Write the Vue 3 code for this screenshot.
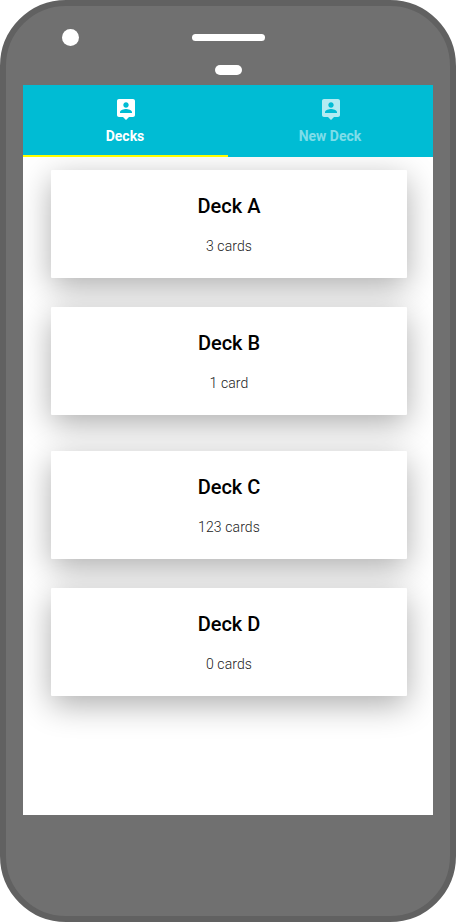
<script setup>
import { ref } from 'vue'

const tabs = ['Decks', 'New Deck']
const active = ref(0)
const groups = [
  [
    { name: 'Deck A', count: '3 cards' },
    { name: 'Deck B', count: '1 card' },
  ],
  [
    { name: 'Deck C', count: '123 cards' },
    { name: 'Deck D', count: '0 cards' },
  ],
]
</script>

<template>
  <div class="phone">
    <header class="hardware">
      <span class="camera"></span>
      <span class="sensors">
        <span class="speaker"></span>
        <span class="sensor"></span>
      </span>
    </header>
    <main class="screen">
      <nav class="tabs">
        <button
          v-for="(tab, i) in tabs"
          :key="tab"
          class="tab"
          :class="{ active: i === active }"
          @click="active = i"
        >
          <svg class="icon" viewBox="0 0 24 24">
            <path
              d="M19 2H5c-1.11 0-2 .9-2 2v14c0 1.1.89 2 2 2h4l3 3 3-3h4c1.1 0 2-.9 2-2V4c0-1.1-.9-2-2-2zm-7 3.3c1.49 0 2.7 1.21 2.7 2.7 0 1.49-1.21 2.7-2.7 2.7-1.49 0-2.7-1.21-2.7-2.7 0-1.49 1.21-2.7 2.7-2.7zM18 16H6v-.9c0-2 4-3.1 6-3.1s6 1.100 6 3.100v.9z"
            />
          </svg>
          <span class="label">{{ tab }}</span>
        </button>
      </nav>
      <div class="decks">
        <section v-for="(group, g) in groups" :key="g" class="group">
          <article v-for="deck in group" :key="deck.name" class="card">
            <h2 class="name">{{ deck.name }}</h2>
            <p class="count">{{ deck.count }}</p>
          </article>
        </section>
      </div>
    </main>
  </div>
</template>

<style>
body {
  background: #fff;
}
</style>

<style scoped>
.phone {
  box-sizing: border-box;
  width: 456px;
  height: 922px;
  padding: 0 17px;
  border: 6px solid #616161;
  border-radius: 66px;
  background: #707070;
  font-family: Roboto, sans-serif;
}
.hardware {
  display: grid;
  grid-template-columns: 1fr auto 1fr;
  height: 79px;
}
.camera {
  width: 17px;
  height: 17px;
  margin: 23px 0 0 39px;
  border-radius: 50%;
  background: #fff;
}
.sensors {
  display: flex;
  flex-direction: column;
  align-items: center;
  gap: 24px;
  padding: 28px 0 0 1px;
}
.speaker {
  width: 73px;
  height: 7px;
  border-radius: 4px;
  background: #fff;
}
.sensor {
  width: 27px;
  height: 10px;
  border-radius: 5px;
  background: #fff;
}
.screen {
  height: 730px;
  overflow: hidden;
  background: #fff;
}
.tabs {
  display: flex;
  height: 72px;
  background: #00bcd4;
}
.tab {
  box-sizing: border-box;
  display: flex;
  flex: 1;
  flex-direction: column;
  align-items: center;
  height: 72px;
  padding: 12px 0 0;
  border: 0;
  border-bottom: 2px solid transparent;
  background: none;
  color: rgba(255, 255, 255, 0.5);
  font: 700 14px/20px Roboto, sans-serif;
}
.tab.active {
  border-bottom-color: #ff0;
  color: #fff;
}
.icon {
  width: 24px;
  height: 24px;
  margin-bottom: 5px;
  fill: rgba(255, 255, 255, 0.7);
}
.active .icon {
  fill: #fff;
}
.label {
  padding-right: 1px;
}
.decks {
  display: flex;
  flex-direction: column;
  gap: 36px;
  height: 658px;
  box-sizing: border-box;
  padding: 13px 26px 0 28px;
  overflow: hidden;
}
.group {
  display: flex;
  flex-direction: column;
  gap: 29px;
}
.card {
  box-sizing: border-box;
  position: relative;
  height: 108px;
  padding: 24px 0 0;
  border-radius: 1px;
  background: #fff;
  box-shadow: 0 9px 32px rgba(0, 0, 0, 0.32);
  text-align: center;
}
.name {
  margin: 0;
  font-size: 20px;
  line-height: 24px;
  font-weight: 500;
  color: #000;
}
.count {
  margin: 18px 0 0;
  font-size: 14px;
  line-height: 20px;
  font-weight: 300;
  letter-spacing: 0.1px;
  color: #222;
}
</style>
